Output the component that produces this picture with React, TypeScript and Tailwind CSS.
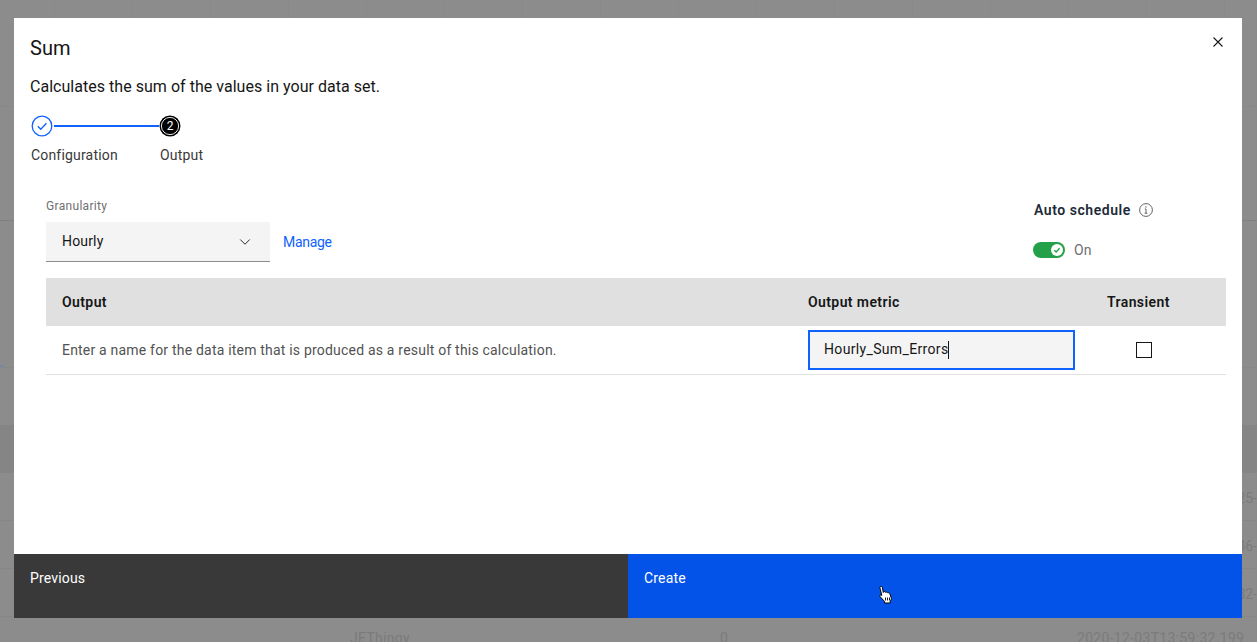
import { ChevronDown } from "lucide-react";

const font = { fontFamily: "Roboto, sans-serif" };
const gridCells = Array.from({ length: 16 });

function Stepper() {
  return (
    <div className="mt-[16px] ml-[1px]">
      <div className="flex items-center h-6">
        <svg width="22" height="22" viewBox="0 0 22 22" fill="none">
          <circle cx="11" cy="11" r="9.8" stroke="#0f62fe" strokeWidth="1.3" />
          <path d="M6.8 11.3l3 3 5.6-6" stroke="#0f62fe" strokeWidth="1.3" />
        </svg>
        <div className="w-[105px] h-[2px] bg-[#0f62fe] ml-[0.5px]" />
        <svg width="22" height="22" viewBox="0 0 22 22" className="ml-[0.5px]">
          <circle cx="11" cy="11" r="10.5" fill="#000" />
          <circle cx="11" cy="11" r="8.6" fill="none" stroke="#fff" strokeWidth="0.9" />
          <text x="11" y="15.2" textAnchor="middle" fontSize="12" fill="#fff" fontFamily="Roboto, sans-serif">2</text>
        </svg>
      </div>
      <div className="flex mt-[8px] text-sm leading-[18px] tracking-[0.18px] text-[#393939]">
        <span className="w-[129px]">Configuration</span>
        <span>Output</span>
      </div>
    </div>
  );
}

function HandCursor() {
  return (
    <svg width="16" height="20" viewBox="0 0 16 20" className="absolute left-[250px] top-[31px]">
      <path
        d="M3 1.5c1 0 1.5.6 1.5 1.5l.8 4.5.5-.8c.8-.3 1.6 0 1.8.6.8-.4 1.6-.2 2 .5.8-.3 1.8 0 2.2.8l1.4 4.2c.3 1.2-.2 2.6-1 3.2V18H6.5v-1.6L2 11.5c-.5-.9.1-1.8 1.2-1.5l.6.4L2 3.2c-.2-.9.2-1.7 1-1.7z"
        fill="#fff"
        stroke="#000"
        strokeWidth="1"
      />
      <path d="M7.5 12.5v3M9.5 12.5v3M11.5 12.5v3" stroke="#000" strokeWidth="0.9" />
    </svg>
  );
}

export default function App() {
  return (
    <div className="relative w-full h-[642px] overflow-hidden bg-[#8c8c8c] text-[#7b7b7b] text-sm" style={font}>
      {/* Page behind the dialog */}
      <div className="flex h-[107px] border-b border-[#888888] pl-[54px]">
        {gridCells.map((_, i) => (
          <div key={i} className="w-[78px] h-full shrink-0 border-l border-[#898989]" />
        ))}
      </div>
      <div className="h-[114px] border-b border-[#7f7f7f]" />
      <div className="flex items-end h-[147px] border-b border-[#888888]">
        <div className="w-[4px] h-[2px] bg-[#7b86a6]" />
      </div>
      <div className="h-[57px]" />
      <div className="h-[48px] bg-[#858585]" />
      <div className="flex items-center justify-end h-[48px] border-b border-[#868686] pt-[2px]">25-</div>
      <div className="flex items-center justify-end h-[48px] border-b border-[#868686] pt-[2px]">46-</div>
      <div className="flex items-center justify-end h-[48px] border-b border-[#868686] pt-[2px]">32-</div>
      <div className="flex items-center h-[48px] pl-[350px] pb-[6px] whitespace-nowrap tracking-[0.3px]">
        <span className="w-[370px] shrink-0">JEThingy</span>
        <span className="w-[357px] shrink-0">0</span>
        <span>2020-12-03T13:59:32.199</span>
      </div>

      {/* Dialog */}
      <div className="absolute left-[14px] top-[18px] w-[1228px] h-[600px] bg-white flex flex-col text-[#161616]">
        <button className="absolute right-[16px] top-[16px] w-4 h-4 flex items-center justify-center">
          <svg width="16" height="16" viewBox="0 0 16 16" fill="none">
            <path d="M3.5 3.5l9 9M12.5 3.5l-9 9" stroke="#161616" strokeWidth="1.1" />
          </svg>
        </button>

        <div className="flex-1 px-4 pt-[17px]">
          <h2 className="text-xl leading-[26px] tracking-[0.1px] text-[#161616]">Sum</h2>
          <p className="mt-[15px] text-base leading-[22px] tracking-[0.03px] text-[#161616]">
            Calculates the sum of the values in your data set.
          </p>
          <Stepper />

          <div className="ml-4 mt-[34px] flex justify-between">
            <div>
              <div className="text-xs leading-4 tracking-[0.32px] text-[#6f6f6f]">Granularity</div>
              <div className="flex items-center mt-[8px]">
                <div className="flex items-center justify-between w-[224px] h-[40px] pl-4 pr-4 bg-[#f4f4f4] border-b border-[#8d8d8d] text-sm tracking-[0.16px]">
                  <span className="-mt-[1px]">Hourly</span>
                  <ChevronDown size={18} strokeWidth={1.2} />
                </div>
                <a className="ml-[13px] text-sm tracking-[-0.3px] text-[#0f62fe]">Manage</a>
              </div>
            </div>
            <div className="w-[193px] pt-[2px]">
              <div className="flex items-center gap-[7px] h-[20px]">
                <span className="ml-[1px] text-sm font-semibold tracking-[0.55px] text-[#1d2b38]">Auto schedule</span>
                <svg width="16" height="16" viewBox="0 0 16 16" fill="none">
                  <circle cx="8" cy="8" r="6.4" stroke="#525252" strokeWidth="0.9" />
                  <path d="M8 7v4M6.6 11.2h2.8M6.8 7h1.2" stroke="#525252" strokeWidth="0.9" />
                  <circle cx="7.9" cy="4.9" r="0.7" fill="#525252" />
                </svg>
              </div>
              <div className="flex items-center mt-[20px]">
                <div className="relative w-[32px] h-[16px] rounded-full bg-[#24a148]">
                  <div className="absolute right-[2px] top-[2px] w-3 h-3 rounded-full bg-white flex items-center justify-center">
                    <svg width="8" height="8" viewBox="0 0 8 8" fill="none">
                      <path d="M1.3 4.2l1.9 1.8 3.4-3.8" stroke="#24a148" strokeWidth="1.4" />
                    </svg>
                  </div>
                </div>
                <span className="ml-[9px] text-sm tracking-[0.16px] text-[#6f6f6f]">On</span>
              </div>
            </div>
          </div>

          <div className="ml-4 mt-[16px]">
            <div className="grid grid-cols-[762px_299px_1fr] items-center h-[48px] bg-[#e0e0e0] text-sm font-semibold tracking-[0.4px] text-[#161616]">
              <span className="pl-4">Output</span>
              <span>Output metric</span>
              <span>Transient</span>
            </div>
            <div className="grid grid-cols-[762px_299px_1fr] items-center h-[49px] border-b border-[#e0e0e0]">
              <span className="pl-4 text-sm tracking-[0.2px] text-[#525252]">
                Enter a name for the data item that is produced as a result of this calculation.
              </span>
              <div className="flex items-center w-[267px] h-[40px] pl-[14px] bg-[#f4f4f4] border-2 border-[#0f62fe] text-sm tracking-[0.34px] text-[#161616]">
                <span className="-mt-[2px]">Hourly_Sum_Errors</span>
                <span className="w-px h-[18px] bg-[#161616]" />
              </div>
              <div className="ml-[29px] w-4 h-4 border border-[#161616]" />
            </div>
          </div>
        </div>

        <div className="flex h-[64px] text-sm tracking-[0.16px] text-white">
          <div className="w-[614px] pl-4 pt-[14px] bg-[#393939]">Previous</div>
          <div className="relative flex-1 pl-4 pt-[14px] bg-[#0353e9]">
            Create
            <HandCursor />
          </div>
        </div>
      </div>
    </div>
  );
}
